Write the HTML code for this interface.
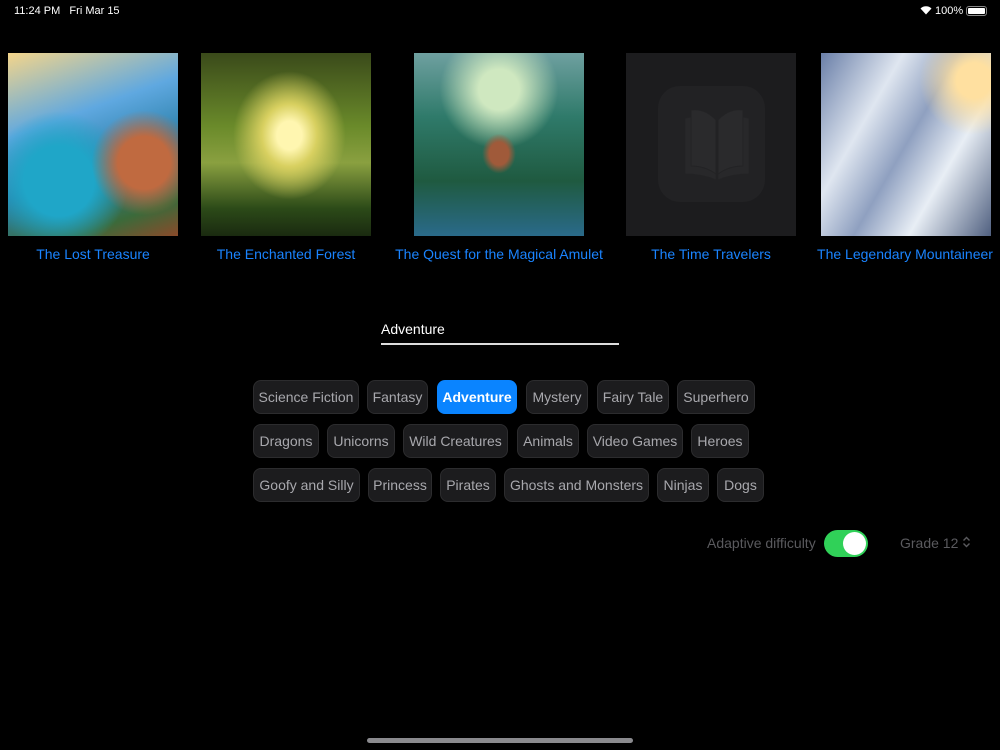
<!DOCTYPE html>
<html><head><meta charset="utf-8"><style>
*{margin:0;padding:0;box-sizing:border-box}
body{width:1000px;height:750px;background:#000;font-family:"Liberation Sans",sans-serif;position:relative;overflow:hidden;color:#fff}
.abs{position:absolute}
.cover{position:absolute;top:53px;width:170px;height:183px}
.title{position:absolute;top:246px;font-size:14px;color:#1a84ff;white-space:nowrap;text-align:center}
.chip{position:absolute;height:34px;border-radius:8px;background:#1c1c1e;border:1px solid #2c2c2e;color:#a8a8ad;font-size:14px;line-height:32px;text-align:center;white-space:nowrap}
.sel{background:#0a84ff;border-color:#0a84ff;color:#fff;font-weight:bold}
</style></head><body>
<div class="abs" style="left:14px;top:5px;font-size:11px">11:24 PM&nbsp;&nbsp;&nbsp;Fri Mar 15</div>
<div class="abs" style="left:920px;top:5px;font-size:11px">
<svg width="12" height="10" viewBox="0 0 12 10" style="vertical-align:-1px"><path d="M6 9.5L0.5 3.5A8 8 0 0 1 11.5 3.5Z" fill="#fff"/></svg> 100%</div>
<div class="abs" style="left:966px;top:6px;width:21px;height:10px;border:1px solid #888;border-radius:3px;padding:1px"><div style="background:#fff;width:100%;height:100%;border-radius:1px"></div></div>

<div class="cover" style="left:8px;background:radial-gradient(circle at 80% 60%,#c06a40 0 15%,transparent 30%),radial-gradient(circle at 30% 70%,#1fa6c8 0 20%,transparent 40%),linear-gradient(160deg,#f4d58a,#5fa8e0 35%,#2a7fa8 60%,#3b6a3a 85%,#8a4a2a)"></div>
<div class="title" style="left:8px;width:170px">The Lost Treasure</div>
<div class="cover" style="left:201px;background:radial-gradient(ellipse at 52% 45%,#fff6b0 0 10%,#d8d060 22%,transparent 45%),linear-gradient(180deg,#3a4a1a,#6a8a2a 40%,#8aa040 60%,#2c4a18 85%,#1a2a10)"></div>
<div class="title" style="left:201px;width:170px">The Enchanted Forest</div>
<div class="cover" style="left:414px;background:radial-gradient(ellipse at 50% 55%,#a05a3a 0 8%,transparent 14%),radial-gradient(circle at 50% 20%,#cfe8c0 0 12%,transparent 35%),linear-gradient(180deg,#6fa0a0,#2f7a6a 35%,#1f5a40 70%,#2a6a8a)"></div>
<div class="title" style="left:380px;width:238px">The Quest for the Magical Amulet</div>
<div class="cover" style="left:626px;background:#1c1c1e">
<div class="abs" style="left:32px;top:33px;width:107px;height:116px;border-radius:22px;background:#222224"></div>
<svg class="abs" style="left:52px;top:43px" width="78" height="90" viewBox="0 0 78 90"><g fill="#28282a" stroke="#232325" stroke-width="1">
<path d="M7 22V78Q24 78 38 84V26Q24 18 7 22Z"/><path d="M71 22V78Q54 78 40 84V26Q54 18 71 22Z"/>
<path d="M13 14V70Q27 70 38 78V24Q27 12 13 14Z" fill="#2a2a2c"/><path d="M65 14V70Q51 70 40 78V24Q51 12 65 14Z" fill="#2a2a2c"/></g></svg>
</div>
<div class="title" style="left:626px;width:170px">The Time Travelers</div>
<div class="cover" style="left:821px;background:radial-gradient(circle at 90% 15%,#ffe0a0 0 8%,transparent 25%),linear-gradient(120deg,#6a7fa8,#dfe6f0 30%,#8fa0c0 50%,#e8eef5 70%,#506080)"></div>
<div class="title" style="left:815px;width:180px">The Legendary Mountaineer</div>

<div class="abs" style="left:381px;top:321px;font-size:14px">Adventure</div>
<div class="abs" style="left:381px;top:343px;width:238px;height:2px;background:#ddd"></div>

<div class="chip" style="left:253px;top:380px;width:106px">Science Fiction</div>
<div class="chip" style="left:367px;top:380px;width:61px">Fantasy</div>
<div class="chip sel" style="left:437px;top:380px;width:80px">Adventure</div>
<div class="chip" style="left:526px;top:380px;width:62px">Mystery</div>
<div class="chip" style="left:597px;top:380px;width:72px">Fairy Tale</div>
<div class="chip" style="left:677px;top:380px;width:78px">Superhero</div>
<div class="chip" style="left:253px;top:424px;width:66px">Dragons</div>
<div class="chip" style="left:327px;top:424px;width:68px">Unicorns</div>
<div class="chip" style="left:403px;top:424px;width:105px">Wild Creatures</div>
<div class="chip" style="left:517px;top:424px;width:62px">Animals</div>
<div class="chip" style="left:587px;top:424px;width:96px">Video Games</div>
<div class="chip" style="left:691px;top:424px;width:58px">Heroes</div>
<div class="chip" style="left:253px;top:468px;width:107px">Goofy and Silly</div>
<div class="chip" style="left:368px;top:468px;width:64px">Princess</div>
<div class="chip" style="left:440px;top:468px;width:56px">Pirates</div>
<div class="chip" style="left:504px;top:468px;width:145px">Ghosts and Monsters</div>
<div class="chip" style="left:657px;top:468px;width:52px">Ninjas</div>
<div class="chip" style="left:717px;top:468px;width:47px">Dogs</div>

<div class="abs" style="left:707px;top:535px;font-size:14px;color:#5a5a5e">Adaptive difficulty</div>
<div class="abs" style="left:824px;top:530px;width:44px;height:27px;border-radius:14px;background:#30d158"><div class="abs" style="right:2px;top:2px;width:23px;height:23px;border-radius:50%;background:#fff"></div></div>
<div class="abs" style="left:900px;top:535px;font-size:14px;color:#5a5a5e">Grade 12 <svg width="9" height="12" viewBox="0 0 9 12"><path d="M1.5 4.5L4.5 1.5L7.5 4.5M1.5 7.5L4.5 10.5L7.5 7.5" fill="none" stroke="#5a5a5e" stroke-width="1.4"/></svg></div>

<div class="abs" style="left:367px;top:738px;width:266px;height:5px;border-radius:3px;background:#8a8a8e"></div>
</body></html>
